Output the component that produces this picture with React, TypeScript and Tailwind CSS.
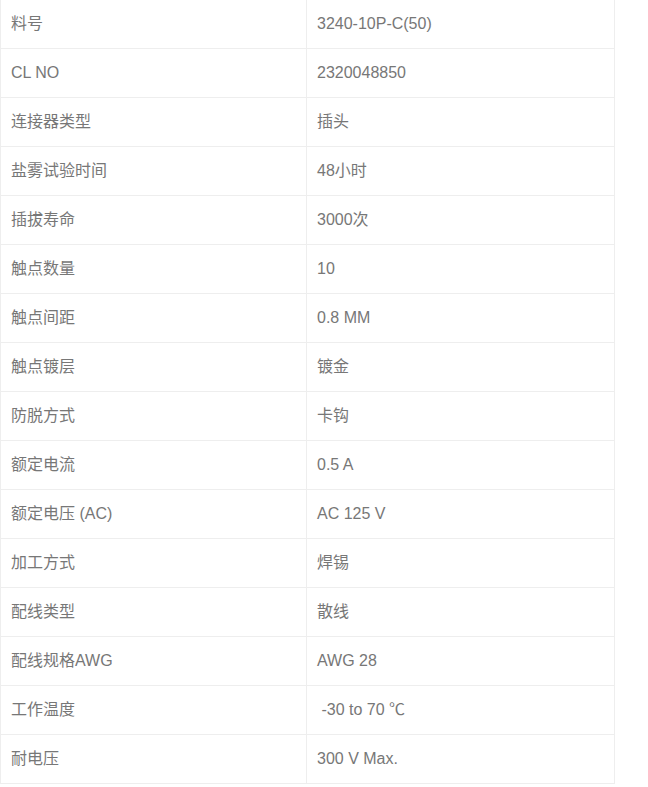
const rows: [string, string][] = [
  ["料号", "3240-10P-C(50)"],
  ["CL NO", "2320048850"],
  ["连接器类型", "插头"],
  ["盐雾试验时间", "48小时"],
  ["插拔寿命", "3000次"],
  ["触点数量", "10"],
  ["触点间距", "0.8 MM"],
  ["触点镀层", "镀金"],
  ["防脱方式", "卡钩"],
  ["额定电流", "0.5 A"],
  ["额定电压 (AC)", "AC 125 V"],
  ["加工方式", "焊锡"],
  ["配线类型", "散线"],
  ["配线规格AWG", "AWG 28"],
  ["工作温度", "\u00a0-30 to 70 ℃"],
  ["耐电压", "300 V Max."],
];

export default function App() {
  return (
    <div className="min-h-[787px] w-[648px] overflow-hidden bg-white font-['Liberation_Sans','Noto_Sans_CJK_SC',sans-serif] text-base text-[#777]">
      <table className="-mt-px w-[614px] table-fixed border-collapse">
        <colgroup>
          <col className="w-[306px]" />
          <col className="w-[308px]" />
        </colgroup>
        <tbody>
          {rows.map(([k, v]) => (
            <tr key={k} className="h-[49px]">
              <td className="border border-[#eee] px-2.5 align-middle">{k}</td>
              <td className="border border-[#eee] px-2.5 align-middle">{v}</td>
            </tr>
          ))}
        </tbody>
      </table>
    </div>
  );
}
